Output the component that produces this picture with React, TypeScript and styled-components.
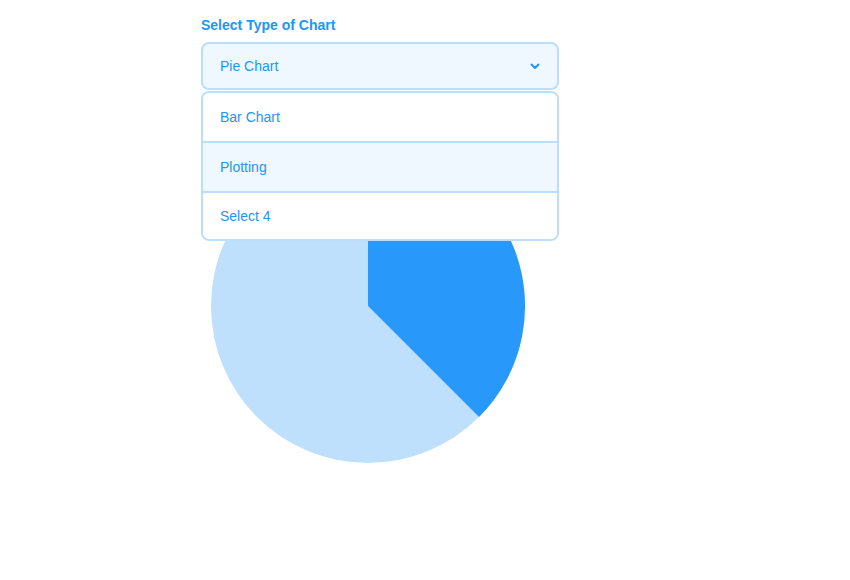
import React, { useState } from "react";
import styled, { createGlobalStyle } from "styled-components";

const Global = createGlobalStyle`
  html, body { margin: 0; padding: 0; background: #ffffff; }
  body { font-family: "Liberation Sans", Arial, sans-serif; }
`;

const Page = styled.div`
  padding: 17px 0 0 201px;
`;

const Field = styled.div`
  width: 358px;
  position: relative;
`;

const Label = styled.div`
  font-size: 14px;
  font-weight: 700;
  color: #2196f3;
  line-height: 16px;
  margin-bottom: 9px;
`;

const SelectBox = styled.div`
  box-sizing: border-box;
  height: 48px;
  border: 2px solid #bbdefb;
  border-radius: 8px;
  background: #f0f8ff;
  display: flex;
  align-items: center;
  justify-content: space-between;
  padding: 0 17px 0 17px;
  color: #2196f3;
  font-size: 14px;
`;

const Menu = styled.ul`
  position: absolute;
  left: 0;
  right: 0;
  top: 74px;
  margin: 0;
  padding: 0;
  list-style: none;
  box-sizing: border-box;
  border: 2px solid #bbdefb;
  border-radius: 8px;
  background: #ffffff;
  overflow: hidden;
  z-index: 2;
`;

const Item = styled.li<{ $active?: boolean }>`
  box-sizing: border-box;
  height: 50px;
  display: flex;
  align-items: center;
  padding-left: 17px;
  color: #2196f3;
  font-size: 14px;
  background: ${(p) => (p.$active ? "#f0f8ff" : "#ffffff")};
  border-top: 2px solid #bbdefb;
  &:first-child {
    border-top: none;
    height: 48px;
  }
  &:last-child {
    height: 48px;
  }
`;

const ChartArea = styled.div`
  margin: 59px 0 0 10px;
  width: 314px;
  height: 314px;
`;

const Chevron = () => (
  <svg width="10" height="7" viewBox="0 0 10 7">
    <path d="M1.5 1.5 L5 5 L8.5 1.5" fill="none" stroke="#2196f3" strokeWidth="2" strokeLinecap="round" strokeLinejoin="round" />
  </svg>
);

const Pie = ({ fraction }: { fraction: number }) => {
  const cx = 157, cy = 157, r = 157;
  const a = fraction * 2 * Math.PI;
  const x = cx + r * Math.sin(a);
  const y = cy - r * Math.cos(a);
  const large = fraction > 0.5 ? 1 : 0;
  return (
    <svg width="314" height="314" viewBox="0 0 314 314">
      <circle cx={cx} cy={cy} r={r} fill="#bee0fd" />
      <path d={`M${cx} ${cy} L${cx} ${cy - r} A${r} ${r} 0 ${large} 1 ${x} ${y} Z`} fill="#2899fb" />
    </svg>
  );
};

export default function App() {
  const [options] = useState(["Bar Chart", "Plotting", "Select 4"]);
  return (
    <>
      <Global />
      <Page>
        <Field>
          <Label>Select Type of Chart</Label>
          <SelectBox>
            <span>Pie Chart</span>
            <Chevron />
          </SelectBox>
          <Menu>
            {options.map((o, i) => (
              <Item key={o} $active={i === 1}>{o}</Item>
            ))}
          </Menu>
          <ChartArea>
            <Pie fraction={0.375} />
          </ChartArea>
        </Field>
      </Page>
    </>
  );
}
